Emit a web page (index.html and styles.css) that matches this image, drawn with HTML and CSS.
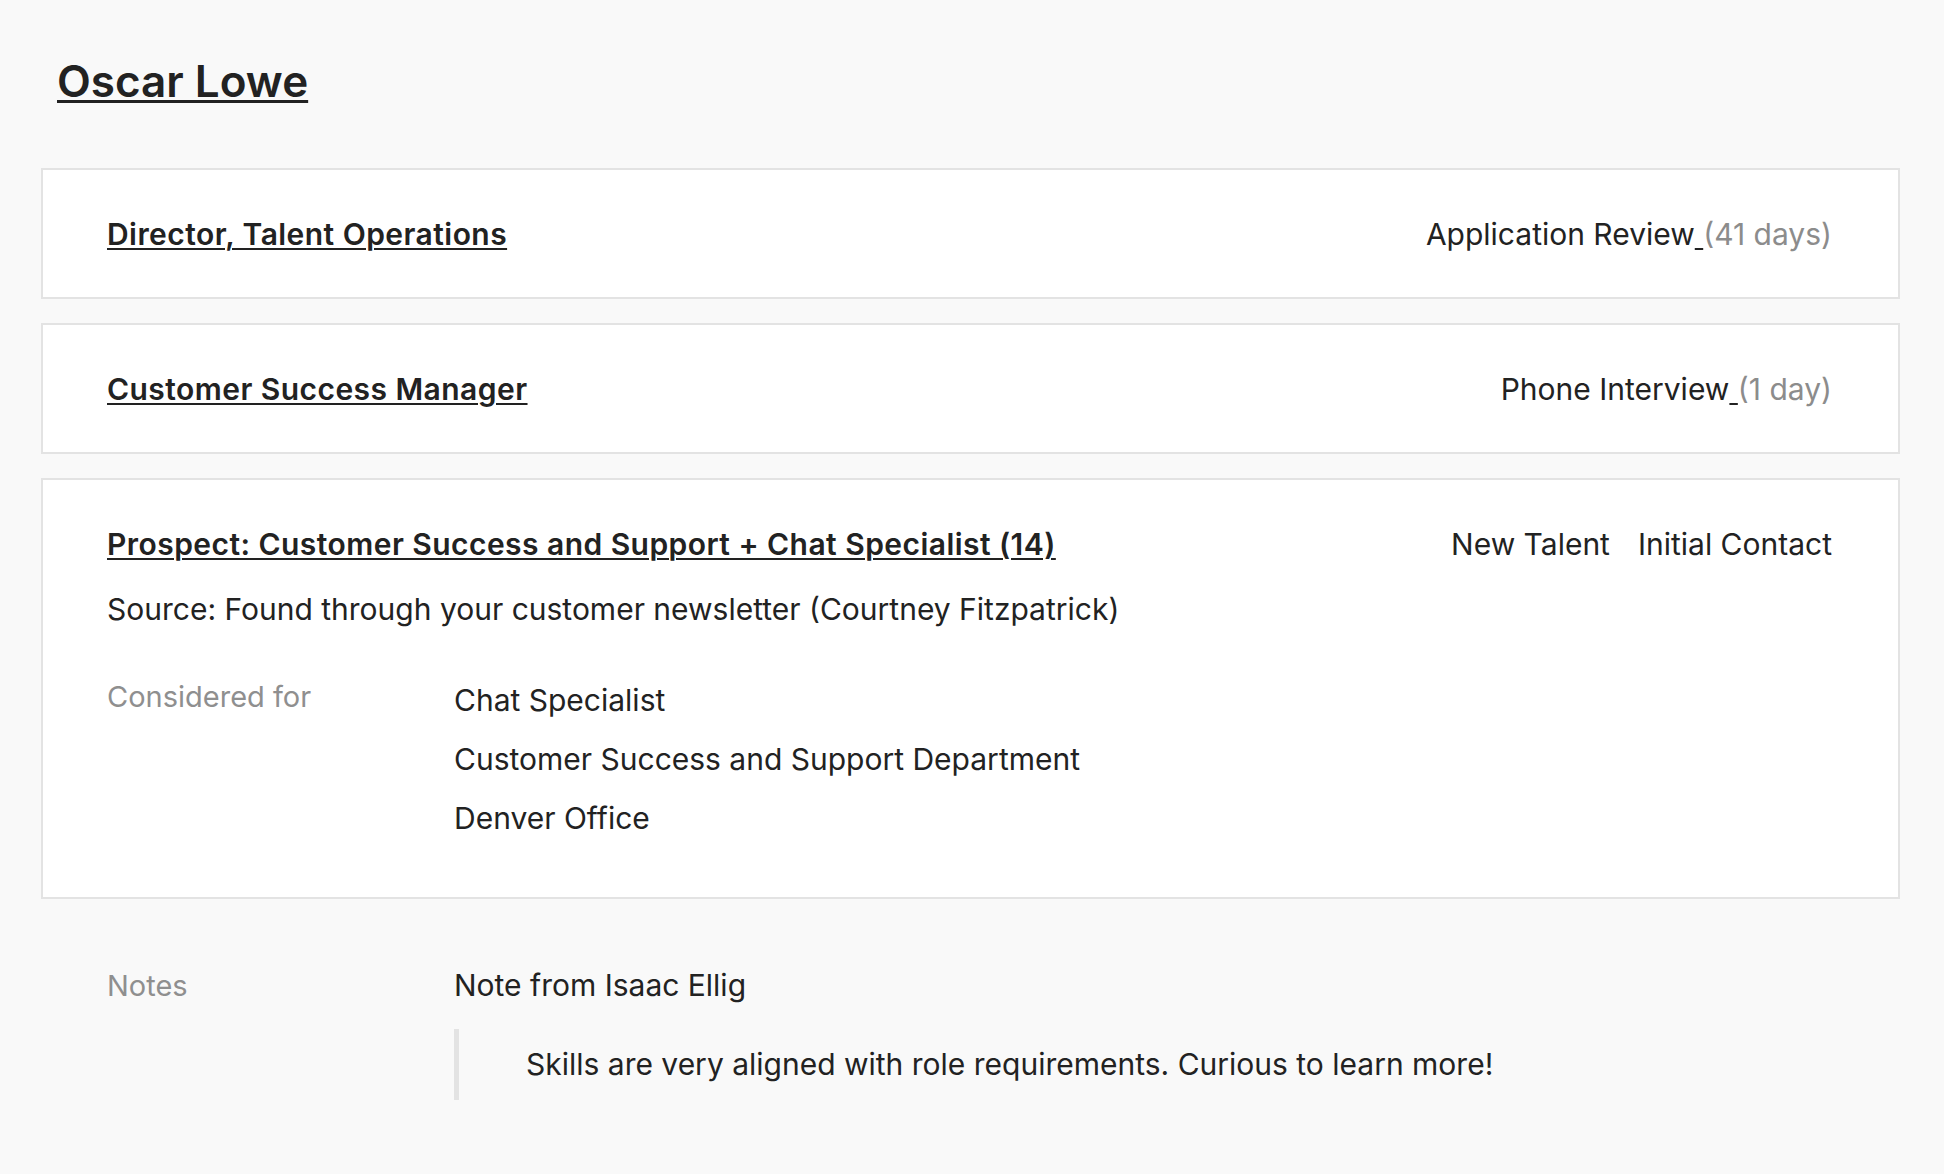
FILE: index.html
```html
<!DOCTYPE html>
<html lang="en">
<head>
  <meta charset="UTF-8">
  <meta name="viewport" content="width=device-width, initial-scale=1.0">
  <title>Oscar Lowe</title>
  <link rel="stylesheet" href="styles.css">
</head>
<body>

<main class="profile">
  <h1 class="candidate-name"><a href="#">Oscar Lowe</a></h1>

  <!-- applications -->
  <div class="applications">
    <section class="application">
      <div class="application-head">
        <a class="job-title" href="#">Director, Talent Operations</a>
        <div class="stage">Application Review<a class="stage-link" href="#"> </a><span class="stage-age">(41 days)</span></div>
      </div>
    </section>

    <section class="application">
      <div class="application-head">
        <a class="job-title" href="#">Customer Success Manager</a>
        <div class="stage">Phone Interview<a class="stage-link" href="#"> </a><span class="stage-age">(1 day)</span></div>
      </div>
    </section>

    <section class="application application-prospect">
      <div class="application-head">
        <a class="job-title" href="#">Prospect: Customer Success and Support + Chat Specialist (14)</a>
        <div class="stage stage-tags">
          <span>New Talent</span>
          <span>Initial Contact</span>
        </div>
      </div>
      <p class="source">Source: Found through your customer newsletter (Courtney Fitzpatrick)</p>
      <dl class="details">
        <dt>Considered for</dt>
        <dd>
          <ul class="considered-list">
            <li>Chat Specialist</li>
            <li>Customer Success and Support Department</li>
            <li>Denver Office</li>
          </ul>
        </dd>
      </dl>
    </section>
  </div>

  <!-- notes -->
  <dl class="details notes">
    <dt>Notes</dt>
    <dd>
      <div class="note-author">Note from Isaac Ellig</div>
      <blockquote class="note-body">Skills are very aligned with role requirements. Curious to learn more!</blockquote>
    </dd>
  </dl>
</main>

</body>
</html>
```

FILE: styles.css
```css
html,body{
  margin: 0;
  background-color: #f9f9f9;
}

body{
  font-family: Inter, "Liberation Sans", sans-serif;
  font-size: 30px;
  line-height: 39px;
  color: #222;
}

a{
  color: #222;
}

.profile{
  padding: 55px 44px 60px 41px;
}

.candidate-name{
  margin: 0 0 60px 16px;
  font-size: 44px;
  line-height: 53px;
  font-weight: 600;
}
.candidate-name a{
  text-decoration-thickness: 3px;
  text-underline-offset: 3px;
}

.applications{
  display: flex;
  flex-direction: column;
  gap: 24px;
}

.application{
  background-color: white;
  border: 2px solid #e3e3e3;
  padding: 45px 66px 43px 64px;
}
.application-prospect{
  padding-bottom: 59px;
}

.application-head{
  display: flex;
  justify-content: space-between;
  align-items: baseline;
}

.job-title{
  font-weight: 600;
  letter-spacing: 0.45px;
  text-decoration-thickness: 2px;
  text-underline-offset: 3px;
}

.stage{
  white-space: nowrap;
}
.stage-link{
  text-decoration-thickness: 2px;
  text-underline-offset: 3px;
}
.stage-age{
  color: #8c8c8c;
}
.stage-tags{
  display: flex;
  gap: 28px;
}

.source{
  margin: 26px 0 0;
}

.details{
  display: grid;
  grid-template-columns: 347px 1fr;
  margin: 52px 0 0;
}
.details dt{
  color: #8f8f8f;
  font-size: 29px;
  margin-top: -4px;
}
.details dd{
  margin: 0;
}

.considered-list{
  list-style: none;
  margin: 0;
  padding: 0;
}
.considered-list li + li{
  margin-top: 20px;
}

.notes{
  margin-top: 67px;
  padding-left: 66px;
}
.notes dt{
  margin-top: 0;
}

.note-body{
  margin: 24px 0 0;
  padding: 16px 0 16px 67px;
  border-left: 5px solid #e3e3e3;
}
```
